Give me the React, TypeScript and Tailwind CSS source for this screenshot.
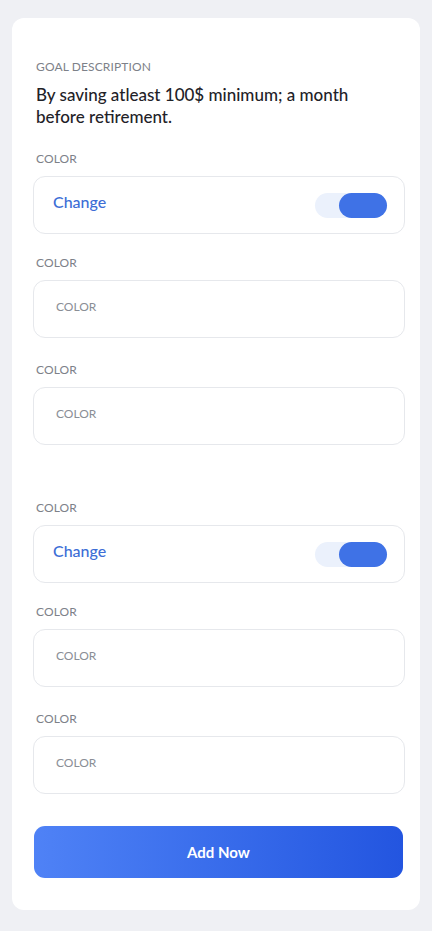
import React from "react";

function Label({ children }: { children: React.ReactNode }) {
  return <div className="pl-[3px] text-[12px] leading-4 tracking-[0.01em] text-[#7d8189] uppercase">{children}</div>;
}

function ToggleRow() {
  return (
    <div className="mt-[9px] h-[58px] rounded-[12px] border border-[#e6e8ec] flex items-center justify-between pl-[19px] pr-[17px]">
      <span className="text-[16px] font-medium text-[#3d6ed6] -mt-[6px]">Change</span>
      <div className="relative w-[72px] h-[25px] rounded-full bg-[#ebf1fc]">
        <div className="absolute right-0 top-0 w-[48px] h-[25px] rounded-full bg-[#3f72e6]" />
      </div>
    </div>
  );
}

function InputRow() {
  return (
    <div className="mt-[9px] h-[58px] rounded-[12px] border border-[#e6e8ec] flex items-center pl-[22px]">
      <span className="text-[12px] text-[#8a8e96] uppercase -mt-[4px]">Color</span>
    </div>
  );
}

function Group({ toggle, className = "" }: { toggle?: boolean; className?: string }) {
  return (
    <div className={className}>
      <Label>Color</Label>
      {toggle ? <ToggleRow /> : <InputRow />}
    </div>
  );
}

export default function App() {
  return (
    <div
      className="min-h-[931px] bg-[#eff0f4] pt-[18px] px-[12px] pb-[20px]"
      style={{ fontFamily: "Lato, 'Noto Sans', sans-serif" }}
    >
      <div className="bg-white rounded-[12px] pt-[41px] pb-[32px] pl-[21px] pr-[15px]">
        <Label>Goal Description</Label>
        <p className="mt-[9px] pl-[3px] text-[17px] leading-[22px] font-medium text-[#1f2228] pr-10">
          By saving atleast 100$ minimum; a month before retirement.
        </p>
        <div className="mt-[23px]">
          <Group toggle />
          <Group className="mt-[21px]" />
          <Group className="mt-[24px]" />
        </div>
        <div className="mt-[55px]">
          <Group toggle />
          <Group className="mt-[21px]" />
          <Group className="mt-[24px]" />
        </div>
        <button className="mt-[32px] ml-px w-[369px] h-[52px] rounded-[11px] bg-gradient-to-r from-[#4f82f6] to-[#2355e0] text-white text-[15px] font-bold">
          Add Now
        </button>
      </div>
    </div>
  );
}
